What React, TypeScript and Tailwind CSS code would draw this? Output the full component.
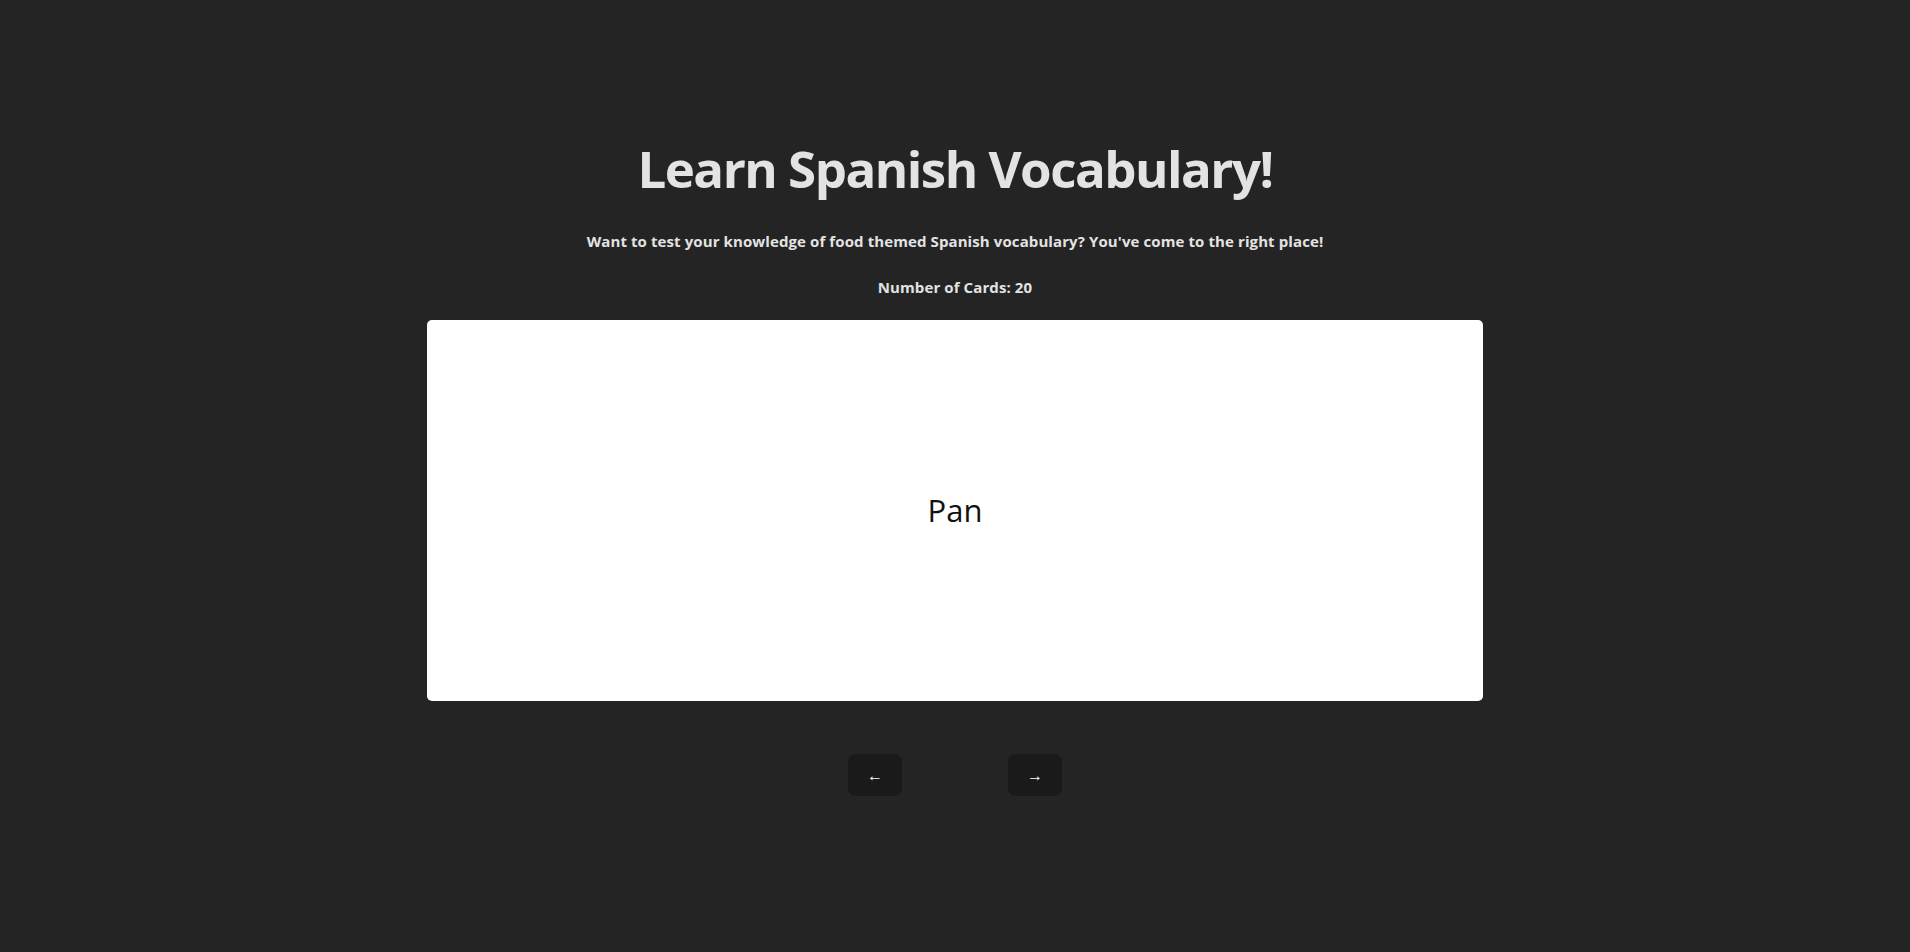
import React, { useState } from "react";

const cards = [
  { es: "Pan", en: "Bread" },
  { es: "Leche", en: "Milk" },
  { es: "Queso", en: "Cheese" },
];

export default function App() {
  const [index, setIndex] = useState(0);
  const [flipped, setFlipped] = useState(false);
  const card = cards[index];

  return (
    <div
      className="min-h-screen w-full bg-[#242424] text-[#e3e3e3] flex flex-col items-center"
      style={{ fontFamily: '"Open Sans", "Noto Sans", sans-serif' }}
    >
      <h1 className="mt-[140px] text-[51px] leading-[1.1] font-bold tracking-[-1.5px]">
        Learn Spanish Vocabulary!
      </h1>
      <p className="mt-[34px] text-[15px] font-bold tracking-[0.1px]">
        Want to test your knowledge of food themed Spanish vocabulary? You've come to the right place!
      </p>
      <p className="mt-[23px] text-[15px] font-bold tracking-[0.1px]">Number of Cards: 20</p>
      <div
        className="mt-[22px] w-[1056px] h-[381px] bg-white rounded-[5px] flex items-center justify-center cursor-pointer"
        onClick={() => setFlipped((f) => !f)}
      >
        <span className="text-[31px] text-[#111]">{flipped ? card.en : card.es}</span>
      </div>
      <div className="mt-[53px] flex gap-[106px]">
        <button
          className="w-[54px] h-[42px] rounded-[8px] bg-[#1a1a1a] text-white text-[16px]"
          onClick={() => {
            setFlipped(false);
            setIndex((i) => (i - 1 + cards.length) % cards.length);
          }}
        >
          ←
        </button>
        <button
          className="w-[54px] h-[42px] rounded-[8px] bg-[#1a1a1a] text-white text-[16px]"
          onClick={() => {
            setFlipped(false);
            setIndex((i) => (i + 1) % cards.length);
          }}
        >
          →
        </button>
      </div>
    </div>
  );
}
